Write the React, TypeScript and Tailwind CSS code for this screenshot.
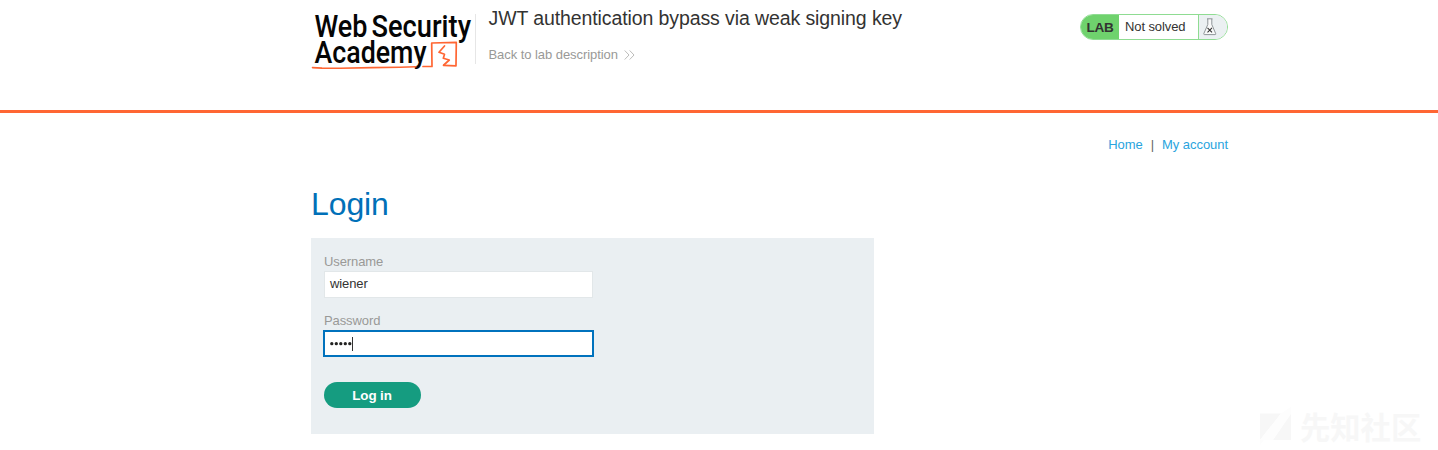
function AcademyLogo() {
  return (
    <svg width="164" height="62" viewBox="311 10 164 62" className="shrink-0 overflow-visible" aria-label="Web Security Academy">
      <g fill="#050505" fontFamily="Roboto, sans-serif" fontWeight="500" fontSize="30.5">
        <text x="314.5" y="37" textLength="53" lengthAdjust="spacingAndGlyphs">Web</text>
        <text x="371.5" y="37" textLength="99.5" lengthAdjust="spacingAndGlyphs">Security</text>
        <text x="314.5" y="63" textLength="112" lengthAdjust="spacingAndGlyphs">Academy</text>
      </g>
      <g fill="none" stroke="#ff6633" strokeLinecap="round" strokeLinejoin="round">
        <path d="M312.5 67.6 L322 68.1 L340 68.2 L372 67.6 L400 67.3 L416 66.8" strokeWidth="1.6" />
        <path d="M423 66.5 L432 66.4 L431.7 43 L456.3 42.4 L456 65.8 L443.5 65.4" strokeWidth="1.7" />
        <path d="M444.5 46 L442.5 48.2 L439 52.3 L444.5 54.3 L443.3 58.3 L449.3 60 L443.8 65" strokeWidth="1.7" />
      </g>
    </svg>
  );
}

function FlaskIcon() {
  return (
    <svg width="14" height="18" viewBox="0 0 14 18" fill="none">
      <path d="M4 .8 H9.5 M4.8 1 V6.5 L.8 15.6 Q.6 16.6 1.6 16.6 H12 Q13 16.6 12.7 15.6 L8.8 6.5 V1" fill="#f8f9f9" stroke="#858b8d" strokeWidth=".9" />
      <path d="M4.5 9.8 L9 14.3 M9 9.8 L4.5 14.3" stroke="#333332" strokeWidth="1.1" />
    </svg>
  );
}

function LabStatus() {
  return (
    <div className="mt-[14px] mr-px flex h-[26px] w-[148px] overflow-hidden rounded-full border border-[#8fdc92] bg-white text-[13px] leading-[24px] text-[#333332]">
      <span className="w-[38px] shrink-0 bg-[#6fd26d] pl-[5.5px] text-[13.6px] leading-[25px] font-bold tracking-[-0.3px]">LAB</span>
      <span className="w-[79px] shrink-0 pl-[6px] tracking-[-0.1px]">Not solved</span>
      <span className="flex flex-1 items-center border-l border-[#8fdc92] bg-[#ebf0f2] pl-[4px]">
        <FlaskIcon />
      </span>
    </div>
  );
}

function Header() {
  return (
    <header className="h-[113px] border-b-[3px] border-[#ff6633]">
      <div className="ml-[311px] flex w-[918px]">
        <div className="mt-[10px]">
          <AcademyLogo />
        </div>
        <div className="mt-[14px] h-[50px] w-px bg-[#e6e6e6]" />
        <div className="ml-[12.5px] flex-1">
          <h1 className="mt-[5px] text-[19.5px] leading-[26px] tracking-[-0.1px] whitespace-nowrap text-[#333332]">
            JWT authentication bypass via weak signing key
          </h1>
          <a href="#" className="mt-[14px] flex items-center text-[13px] leading-[20px] tracking-[-0.06px] text-[#999997]">
            Back to lab description
            <svg width="11" height="10" viewBox="0 0 11 10" className="ml-[6px]" fill="none" stroke="#b4b4b2" strokeWidth=".9">
              <path d="M.7 .5 L5 5 L.7 9.5 M5.7 .5 L10 5 L5.7 9.5" />
            </svg>
          </a>
        </div>
        <LabStatus />
      </div>
    </header>
  );
}

function Watermark() {
  return (
    <div className="absolute top-[406px] left-[1260px] flex items-start text-[#f7f7f7]">
      <svg width="32" height="40" viewBox="0 0 32 40" fill="currentColor">
        <path d="M0 7.5 H21 L0 34 Z M31 7 V34 H13 Z" />
        <path d="M21 7.5 L31 1 V8 L13 34 H4 L0 39 V34 L21 7.5 Z" fill="#fdfdfd" />
      </svg>
      <span lang="zh-CN" className="ml-[8px] font-['Noto_Sans_CJK_SC',sans-serif] text-[30.3px] leading-[40px] font-bold">先知社区</span>
    </div>
  );
}

export default function App() {
  return (
    <div className="relative h-[450px] overflow-hidden bg-white font-['Liberation_Sans',Arial,sans-serif]">
      <Header />
      <main className="ml-[311px] w-[917px]">
        <nav className="flex justify-end pt-[22px] text-[13px] leading-[20px] tracking-[-0.05px] text-[#29a4de]">
          <a href="#">Home</a>
          <span className="mx-[8px] text-[#666664]">|</span>
          <a href="#">My account</a>
        </nav>
        <h2 className="mt-[29px] text-[32px] leading-[40px] tracking-[-0.1px] text-[#0070b8]">Login</h2>
        <form className="mt-[14px] h-[196px] w-[563px] bg-[#eaeff2] pt-[14px] pl-[13px] text-[13px] tracking-[-0.1px]">
          <label className="block h-[19px] leading-[19px] text-[#999997]">Username</label>
          <div className="h-[27px] w-[269px] border border-[#e2e7e9] bg-white pl-[5px] leading-[24px] text-[#333332]">wiener</div>
          <label className="mt-[14px] block h-[18px] leading-[18px] text-[#999997]">Password</label>
          <div className="-ml-px flex h-[27px] w-[271px] items-center border-2 border-[#0072bd] bg-white pl-[5px] text-[#222221]">
            <svg width="22" height="4" viewBox="0 0 22 4" fill="#222221">
              {[0, 1, 2, 3, 4].map((dot) => (
                <circle key={dot} cx={1.8 + dot * 4.5} cy="1.7" r="1.65" />
              ))}
            </svg>
            <span className="h-[14px] w-px bg-[#333332]" />
          </div>
          <button type="button" className="mt-[25px] block h-[26px] w-[97px] rounded-full bg-[#159c80] pr-px text-[13.4px] leading-[25px] font-bold tracking-[-0.1px] text-white">
            Log in
          </button>
        </form>
      </main>
      <Watermark />
    </div>
  );
}
